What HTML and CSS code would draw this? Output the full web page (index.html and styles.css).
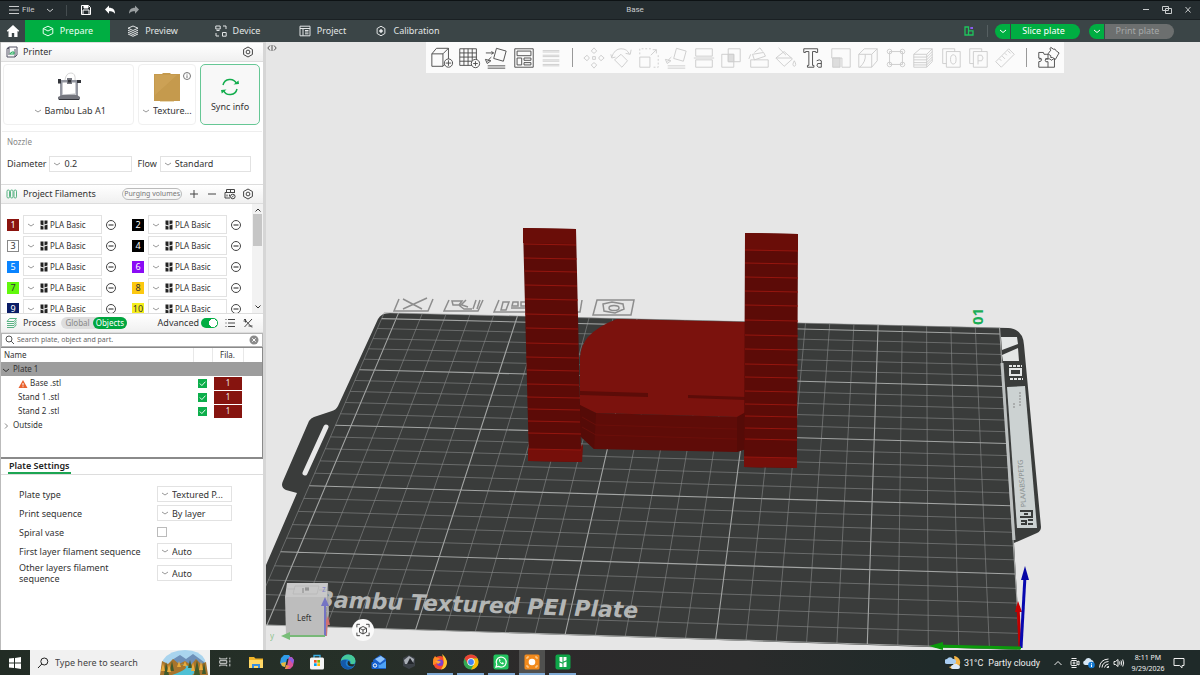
FILE: index.html
```html
<!DOCTYPE html>
<html lang="en">
<head>
<meta charset="utf-8">
<title>Base</title>
<link rel="stylesheet" href="styles.css">
</head>
<body>
<svg class="sprite" aria-hidden="true">
  <symbol id="hex" viewBox="0 0 12 12"><path d="M6 1 10.4 3.5v5L6 11 1.6 8.500v-5z"/><circle cx="6" cy="6" r="1.9"/></symbol>
  <symbol id="minus" viewBox="0 0 12 12"><circle cx="6" cy="6" r="4.500"/><path d="M3.500 6h5" stroke-width="1.200"/></symbol>
  <symbol id="chev" viewBox="0 0 8 8"><path d="M1 3l3 2.500L7 3"/></symbol>
  <symbol id="check" viewBox="0 0 10 10"><path d="M2 5l2.300 2.300L8.200 3"/></symbol>
</svg>

<header class="titlebar">
  <button class="file-menu"><svg class="ic i10" viewBox="0 0 10 10"><path d="M0 1.500h10M0 5h10M0 8.500h10"/></svg>File</button>
  <button class="tb-btn" aria-label="File menu"><svg class="ic i8"><use href="#chev"/></svg></button>
  <span class="tb-sep"></span>
  <button class="tb-btn" aria-label="Save"><svg class="ic i12 bright" viewBox="0 0 12 12"><path d="M1.500 1.500h7l2 2v7h-9zM3 10V6h6v4"/><path d="M4 2h4v2H4z" fill="currentColor"/></svg></button>
  <button class="tb-btn" aria-label="Undo"><svg class="ic i12 bright" viewBox="0 0 12 12"><path d="M5 1.500v2.300c4 0 6 2 6 6-1.500-2-3-2.500-6-2.500v2.400L1 5.500z" fill="currentColor" stroke="none"/></svg></button>
  <button class="tb-btn" aria-label="Redo"><svg class="ic i12 dim" viewBox="0 0 12 12"><path d="M7 1.500v2.300c-4 0-6 2-6 6 1.500-2 3-2.500 6-2.500v2.400l4-4.200z" fill="currentColor" stroke="none"/></svg></button>
  <h1 class="doc-title">Base</h1>
  <div class="win-controls">
    <button class="tb-btn" aria-label="Minimize"><svg class="ic i10" viewBox="0 0 10 10"><path d="M2 4.500h6"/></svg></button>
    <button class="tb-btn" aria-label="Restore"><svg class="ic i10" viewBox="0 0 10 10"><path d="M.5 1.500h6v4h-6zM3.500 3.500h6v5h-6z"/></svg></button>
    <button class="tb-btn" aria-label="Close"><svg class="ic i10" viewBox="0 0 10 10"><path d="M2.500 2l5 5.500M7.500 2l-5 5.500"/></svg></button>
  </div>
</header>

<nav class="navbar">
  <button class="home" aria-label="Home"><svg class="i14" viewBox="0 0 14 14"><path d="M7 1 .8 6.800l.9.900.8-.600V13h3.300V9h2.400v4h3.300V7.100l.8.600.9-.900z" fill="#fff"/></svg></button>
  <a class="tab active" href="#prepare"><svg class="ic i12" viewBox="0 0 12 12"><path d="M6 1.200 10.800 3.500v5L6 10.800 1.200 8.500v-5zM1.200 3.500 6 6l4.800-2.500"/></svg>Prepare</a>
  <a class="tab" href="#preview"><svg class="ic i12" viewBox="0 0 12 12"><path d="M6 1l5 2.200-5 2.300-5-2.300zM1 5.200l5 2.300 5-2.300M1 7.200l5 2.300 5-2.300M1 9l5 2.300L11 9"/></svg>Preview</a>
  <a class="tab" href="#device"><svg class="ic i12" viewBox="0 0 12 12"><path d="M.8 1h4.400v3H.8zM1.500 5.500h3M7.500 7.500h3.700v3.700H7.500zM8 1h3v3M1 8v3h3"/></svg>Device</a>
  <a class="tab" href="#project"><svg class="ic i12" viewBox="0 0 12 12"><path d="M1 1.200h10v9.600H1zM1 3.500h10M4 3.500v7.300M6 5.500h3.500M6 7h3.500M6 8.800h3.500"/></svg>Project</a>
  <a class="tab" href="#calibration"><svg class="ic i12" viewBox="0 0 12 12"><path d="M6 1.200 9.900 3.500v5L6 10.800 2.100 8.500v-5z"/><circle cx="6" cy="6" r="1.300" fill="currentColor"/></svg>Calibration</a>
  <div class="nav-right">
    <button class="layout-btn" aria-label="Layout"><svg class="i10" viewBox="0 0 10 10"><path d="M1 1h3.500v8H1zM4.500 4.800H9V9H4.500z" fill="none" stroke="#1fc45d" stroke-width="1.300"/><path d="M6.300 1H9v2H6.300z" fill="#8a5cf0"/></svg></button>
    <span class="nav-sep"></span>
    <div class="split"><button class="split-arrow" aria-label="Slice options"><svg class="ic i8"><use href="#chev"/></svg></button><button class="split-main">Slice plate</button></div>
    <div class="split off"><button class="split-arrow" aria-label="Print options"><svg class="ic i8"><use href="#chev"/></svg></button><button class="split-main" disabled>Print plate</button></div>
  </div>
</nav>

<div class="workspace">
<aside class="sidebar">
  <section>
    <div class="sec-head">
      <svg class="ic i12 sec-ic" viewBox="0 0 12 12"><path d="M1 2.500 3 1h8v8l-2 2H1zM3 1v8M9 3v8M1 2.500h2"/><path d="M4 7.500l2-1.500h2v2H4z" stroke="#19a955"/></svg>
      <h2>Printer</h2>
      <button class="icon-btn push" aria-label="Printer settings"><svg class="ic i12"><use href="#hex"/></svg></button>
    </div>
    <div class="cards">
      <div class="card wide">
        <svg class="pic" viewBox="0 0 32 32"><path d="M12 9q1-7 6-7t4 8" fill="none" stroke="#ccc" stroke-width=".8"/><path d="M6 9h20v2.500H6zM7 11h2.500v15H7zM22.500 11H25v15h-2.500z" fill="#9396a0"/><path d="M5 26l4-2h15l3 2v2.500H5zM14 7h5v6h-5z" fill="#74767e"/><path d="M5 8h3v4.500H5zM24 9h4v3h-4zM15 9h3v2.500h-3zM6 28h20v1H6z" fill="#33353b"/><path d="M10 23.500l12-1v1.500H10z" fill="#b6b8bd"/></svg>
        <select class="plain" aria-label="Printer model"><option>Bambu Lab A1</option></select>
      </div>
      <div class="card mid">
        <svg class="pic" viewBox="0 0 32 32"><path d="M3 3h8l1-1h7l1 1h9v27H3z" fill="#c59a4d"/><path d="M4 4h22L4 24z" fill="#d0a75c" opacity=".6"/><path d="M9 30.500h14" stroke="#ead9b5"/></svg>
        <svg class="ic i8 info" viewBox="0 0 8 8"><circle cx="4" cy="4" r="3.500"/><path d="M4 3.300V6M4 1.800v.8"/></svg>
        <select class="plain" aria-label="Plate"><option>Texture...</option></select>
      </div>
      <button class="sync"><svg viewBox="0 0 20 20"><path d="M3 8a7.200 7.200 0 0 1 13.500-1.500M17 12A7.200 7.200 0 0 1 3.500 13.500" fill="none" stroke="#12ad4d" stroke-width="1.500"/><path d="M13.500 7.500l5.500-.5-.5-3.500zM6.500 12.500l-5.500.5.8 3.500z" fill="#12ad4d"/></svg>Sync info</button>
    </div>
    <div class="nozzle">
      <h3>Nozzle</h3>
      <div class="nozzle-row">
        <label for="dia">Diameter</label><select id="dia" class="box"><option>0.2</option></select>
        <label for="flow">Flow</label><select id="flow" class="box"><option>Standard</option></select>
      </div>
    </div>
  </section>

  <section>
    <div class="sec-head">
      <svg class="ic i12 sec-ic green" viewBox="0 0 12 12"><rect x="1" y="2" width="2.500" height="8" rx="1.200"/><rect x="4.500" y="2" width="2.500" height="8" rx="1.200"/><rect x="8" y="2" width="2.500" height="8" rx="1.200"/></svg>
      <h2>Project Filaments</h2>
      <button class="purge push">Purging volumes</button>
      <button class="icon-btn" aria-label="Add filament"><svg class="ic i12" viewBox="0 0 12 12"><path d="M6 2v8M2 6h8"/></svg></button>
      <button class="icon-btn" aria-label="Remove filament"><svg class="ic i12" viewBox="0 0 12 12"><path d="M2 6h8"/></svg></button>
      <button class="icon-btn" aria-label="Sync filaments"><svg class="ic i12" viewBox="0 0 12 12"><path d="M2.500 1.500h8v3h-8zM1 4.500h10M1 4.500V10h5M3 6.500v2M5.500 6.500v2M6.500 1.500v3"/><circle cx="8.800" cy="8.500" r="2.300"/><path d="M7.800 9.500l2-2"/></svg></button>
      <button class="icon-btn" aria-label="Filament settings"><svg class="ic i12"><use href="#hex"/></svg></button>
    </div>
    <div class="fil-area">
      <ul class="fil-list">
        <li><span class="chip c1">1</span><select class="box fil" aria-label="Filament 1"><option>PLA Basic</option></select><button class="icon-btn" aria-label="Edit 1"><svg class="ic i12"><use href="#minus"/></svg></button></li>
        <li><span class="chip c2">2</span><select class="box fil" aria-label="Filament 2"><option>PLA Basic</option></select><button class="icon-btn" aria-label="Edit 2"><svg class="ic i12"><use href="#minus"/></svg></button></li>
        <li><span class="chip c3">3</span><select class="box fil" aria-label="Filament 3"><option>PLA Basic</option></select><button class="icon-btn" aria-label="Edit 3"><svg class="ic i12"><use href="#minus"/></svg></button></li>
        <li><span class="chip c2">4</span><select class="box fil" aria-label="Filament 4"><option>PLA Basic</option></select><button class="icon-btn" aria-label="Edit 4"><svg class="ic i12"><use href="#minus"/></svg></button></li>
        <li><span class="chip c5">5</span><select class="box fil" aria-label="Filament 5"><option>PLA Basic</option></select><button class="icon-btn" aria-label="Edit 5"><svg class="ic i12"><use href="#minus"/></svg></button></li>
        <li><span class="chip c6">6</span><select class="box fil" aria-label="Filament 6"><option>PLA Basic</option></select><button class="icon-btn" aria-label="Edit 6"><svg class="ic i12"><use href="#minus"/></svg></button></li>
        <li><span class="chip c7">7</span><select class="box fil" aria-label="Filament 7"><option>PLA Basic</option></select><button class="icon-btn" aria-label="Edit 7"><svg class="ic i12"><use href="#minus"/></svg></button></li>
        <li><span class="chip c8">8</span><select class="box fil" aria-label="Filament 8"><option>PLA Basic</option></select><button class="icon-btn" aria-label="Edit 8"><svg class="ic i12"><use href="#minus"/></svg></button></li>
        <li><span class="chip c9">9</span><select class="box fil" aria-label="Filament 9"><option>PLA Basic</option></select><button class="icon-btn" aria-label="Edit 9"><svg class="ic i12"><use href="#minus"/></svg></button></li>
        <li><span class="chip c10">10</span><select class="box fil" aria-label="Filament 10"><option>PLA Basic</option></select><button class="icon-btn" aria-label="Edit 10"><svg class="ic i12"><use href="#minus"/></svg></button></li>
      </ul>
      <div class="scroll"><svg class="ic i8" viewBox="0 0 8 8"><path d="M1.500 5.500 4 3l2.500 2.500"/></svg><span class="thumb"></span><svg class="ic i8 last" viewBox="0 0 8 8"><path d="M1.500 2.500 4 5l2.500-2.500"/></svg></div>
    </div>
  </section>

  <section>
    <div class="sec-head process">
      <svg class="ic i12 sec-ic green" viewBox="0 0 12 12"><path d="M3.500 1.500h7L8 4.500H1zM1 6.500h7l2.500-3M1 8.500h7l2.500-3M1 10.500h7l2.500-3"/></svg>
      <h2>Process</h2>
      <div class="seg"><button>Global</button><button class="on">Objects</button></div>
      <label class="adv push">Advanced<input type="checkbox" class="switch" checked></label>
      <button class="icon-btn" aria-label="List"><svg class="ic i12" viewBox="0 0 12 12"><path d="M4 2.500h7M4 6h7M4 9.500h7M1.500 2.500h1M1.500 6h1M1.500 9.500h1"/></svg></button>
      <button class="icon-btn" aria-label="Compare"><svg class="ic i12" viewBox="0 0 12 12"><path d="M2 2l8 8.500M10 2 2.500 10M1.500 4h3M6.500 9h4M3.500 2v3.500"/></svg></button>
    </div>
    <label class="search">
      <svg class="ic i10" viewBox="0 0 10 10"><circle cx="4" cy="4" r="3"/><path d="M6.200 6.200 9 9"/></svg>
      <input type="text" placeholder="Search plate, object and part." aria-label="Search plate, object and part">
      <svg class="i10" viewBox="0 0 10 10"><circle cx="5" cy="5" r="4.500" fill="#8b8b8b"/><path d="M3.300 3.300l3.400 3.400M6.700 3.300 3.300 6.700" stroke="#fff"/></svg>
    </label>
    <div class="tree">
      <table>
        <colgroup><col><col class="col-chk"><col class="col-fil"><col class="col-end"></colgroup>
        <thead><tr><th>Name</th><th></th><th class="ctr">Fila.</th><th></th></tr></thead>
        <tbody>
          <tr class="sel"><td><svg class="ic i8 dk"><use href="#chev"/></svg>Plate 1</td><td></td><td></td><td></td></tr>
          <tr><td class="in1"><svg class="i10" viewBox="0 0 10 10"><path d="M5 1l4.500 8h-9z" fill="#e8622f"/><path d="M5 4v2.500M5 7.300v.9" stroke="#fff"/></svg>Base .stl</td><td><span class="tick"><svg class="ic i10"><use href="#check"/></svg></span></td><td><span class="fila">1</span></td><td></td></tr>
          <tr><td class="in2">Stand 1 .stl</td><td><span class="tick"><svg class="ic i10"><use href="#check"/></svg></span></td><td><span class="fila">1</span></td><td></td></tr>
          <tr><td class="in2">Stand 2 .stl</td><td><span class="tick"><svg class="ic i10"><use href="#check"/></svg></span></td><td><span class="fila">1</span></td><td></td></tr>
          <tr><td><svg class="ic i8 lt" viewBox="0 0 8 8"><path d="M3 1.500 5.500 4 3 6.500"/></svg>Outside</td><td></td><td></td><td></td></tr>
        </tbody>
      </table>
    </div>
  </section>

  <section class="settings">
    <div class="set-tabs"><h2>Plate Settings</h2></div>
    <div class="set-grid">
      <label for="s1">Plate type</label><select id="s1" class="box"><option>Textured P...</option></select>
      <label for="s2">Print sequence</label><select id="s2" class="box"><option>By layer</option></select>
      <label for="s3">Spiral vase</label><input id="s3" type="checkbox" class="chk">
      <label for="s4">First layer filament sequence</label><select id="s4" class="box"><option>Auto</option></select>
      <label for="s5">Other layers filament sequence</label><select id="s5" class="box"><option>Auto</option></select>
    </div>
  </section>
</aside>

<main class="viewport">
  <svg class="scene" viewBox="266 42 934 608" preserveAspectRatio="xMidYMid slice" role="img" aria-label="Build plate with three parts">
    <g class="plate-icons">
      <path d="M399 299l-5 12h34l5-12M403 299l19 10M427 298l-24 11"/>
      <path d="M449 300l-5 11h34l5-11M452 301h10l-3 4h-6zM466 300l-6 6 4 3h8M468 307l-6-2M476 300l-3 9M480 300l-3 9"/>
      <path d="M499 300l-5 12h86l2-12M503 302h6l-3 8h-5zM513 302h5v4h-6zM511 308h14M521 302h5v4h-5z"/>
      <path d="M597 300h37l-3 15h-38zM603 304l9-2 11 2 1 5-9 4-11-2z"/><ellipse cx="614" cy="308" rx="5" ry="2.500"/>
    </g>
    <path fill="#3a3c3b" d="M266 625V565L297 493 286 490Q280 487 283 481L309 421Q311 418 314 417L332 411Q336 410 338 406L378 319Q381 313 390 313L1008 328Q1023 329 1024 345L1041 527Q1041 531 1037 533L1014 543 1020 650Z"/>
    <path d="M326 427 305 473" stroke="#e8e8e8" stroke-width="5" stroke-linecap="round"/>
    <path id="grid-minor" class="minor"/>
    <path id="grid-major" class="major"/>
    <path d="M1002 363l12 177" stroke="#bcc0c0" stroke-width="3"/>
    <path d="M1001 337h16l1 7-16 6zM1002 355l16-7 1 13h-16z" fill="#e4e6e6"/>
    <path fill="#ccd2d2" d="M1007 387l18-1 12 142-20 0z"/>
    <path d="M1010 369h11v6h-11zM1008 366h14M1009 379h14" fill="none" stroke="#e4e6e6" stroke-width="2"/>
    <path d="M1008 366h14M1009 379h14" stroke="#3a3c3b" stroke-width="2" stroke-dasharray="1 3"/>
    <path d="M1020 511h12v6h-12M1024 514h4M1021 521h5v3h-5M1028 520h5M1028 524h5M1032 511v6" fill="none" stroke="#3a3c3b" stroke-width="2"/>
    <g class="plate-notes"><text transform="translate(1026 507) rotate(-94)">PLA/ABS/PETG</text><path d="M1014 408v-6M1020 406v-14" stroke="#888" stroke-dasharray="2 1"/></g>
    <text class="plate-num" transform="translate(983 325) rotate(-90)">01</text>
    <text class="plate-name" transform="translate(638 618) rotate(2)">Bambu Textured PEI Plate</text>

    <path fill="#7b120d" d="M580 357Q581 345 588 337 598 326 617 319L746 322V414L737 417 596 413 580 407Z"/>
    <path fill="#5f0c08" d="M580 405 596 413 737 417 746 412V449L737 452 594 449 580 436Z"/>
    <path fill="#4b0905" d="M737 417l9-5v37l-9 3zM580 405l16 8-2 36-14-13z" opacity=".5"/>
    <path d="M582 417l14 8 141 4M582 427l14 8 141 4" stroke="#6d0f0a" stroke-width=".8" fill="none"/>
    <path fill="#5c0c08" d="M580 391l68 2v4l-68-2zM688 395l58 2v3l-58-2z"/>

    <path fill="#5c0b07" d="M523 228l53 1 5 219 1 14-53-1z"/>
    <path fill="#760f0a" d="M528 449l52 1 2-6 1 2-1 16-54-1z"/>
    <path fill="#5c0b07" d="M745 233l53 1-1 217v17l-53-1z"/>
    <path fill="#760f0a" d="M744 457l53 1v10l-53-1z"/>
    <path fill="#6a0d08" d="M523 228l53 1v15l-53-1zM745 233l53 1v17l-53-1z"/>
    <path class="steps" d="M524 244l52 1M524 258l53 1M525 271l52 1M525 285l52 1M525 299l53 1M525 314l53 1M526 328l52 1M526 343l52 1M526 357l53 1M527 370l52 1M527 384l52 1M527 397l53 1M528 409l52 1M528 421l52 1M528 433l53 1M528 449l53 1M745 250l53 1M745 263l53 1M745 277l53 1M745 291l53 1M745 305l53 1M745 320l53 1M745 335l53 1M745 349l53 1M745 364l53 1M745 377l53 1M745 391l52 1M745 404l52 1M745 416l52 1M745 428l52 1M745 439l52 1M744 457l53 1"/>

    <path d="M1020 647 1018 606" stroke="#c00000" stroke-width="3"/><path d="M1015 612l3-11 4 11z" fill="#c80000"/>
    <path d="M1021 648 1025 576" stroke="#0808b0" stroke-width="3"/><path d="M1021 580l4-14 4 14z" fill="#0505a5"/>
    <path d="M1021 648 935 646" stroke="#0a9a0a" stroke-width="3"/><path d="M943 642l-14 4 14 4z" fill="#0a9a0a"/>
  </svg>

  <div class="collapse"><svg class="ic i10" viewBox="0 0 10 10"><path d="M3 2.500.8 5 3 7.500M7 2.500 9.200 5 7 7.500M5 2v6"/></svg></div>

  <div class="tools">
    <button aria-label="Add"><svg class="ic" viewBox="0 0 26 26"><path d="M2 8.500h12V22H2zM2 8.500l5-6h13l-6 6M20 2.500V14M14 22l3-3"/><circle cx="20" cy="18.500" r="4.500" fill="#fbfbfb"/><path d="M17 18.500h6M20 15.500v6"/></svg></button>
    <button aria-label="Add plate"><svg class="ic" viewBox="0 0 26 26"><path d="M3 3h18v18H3zM7.500 3v18M12 3v18M16.500 3v18M3 7.500h18M3 12h18M3 16.500h18"/><circle cx="20" cy="19" r="4.500" fill="#fbfbfb"/><path d="M17.500 19h5M20 16.500v5"/></svg></button>
    <button aria-label="Auto orient"><svg class="ic" viewBox="0 0 26 26"><path d="M13.500 2.500 24 5.500 21 16.500 10.500 13.500zM2 7.500h8M8 6l2.500 1.500L8 9M8 12q-3 2-4 5M1.500 14.500 3.500 19l4-3zM4 21.500h19M4 24h19"/></svg></button>
    <button aria-label="Arrange"><svg class="ic" viewBox="0 0 26 26"><path d="M3 3h20v20H3zM5.500 5.500h15v5h-15zM5.500 13h5v7.500h-5zM13 13h7.500v2.500H13zM13 18h7.500v2.500H13z"/></svg></button>
    <button class="off" aria-label="Layers"><svg class="ic" viewBox="0 0 26 26"><path d="M4 5h18M4 6.500h18M4 10h18M4 11.500h18M4 15h18M4 16.500h18M4 20h18M4 21.500h18"/></svg></button>
    <span class="tool-sep"></span>
    <button class="off" aria-label="Move"><svg class="ic" viewBox="0 0 26 26"><path d="M13 2l3 3.500-3 2.500-3-2.500zM13 24l3-3.500-3-2.500-3 2.500zM2 13l3.500-3L8 13l-2.500 3zM24 13l-3.500-3-2.500 3 2.500 3zM11.500 11.500h3v3h-3z"/></svg></button>
    <button class="off" aria-label="Rotate"><svg class="ic" viewBox="0 0 26 26"><path d="M13 9l7 7-6 7-8-8zM3 12Q6 3 13 3t9 6M18 8l5 1 1-5M2 9l1 4 4-1"/></svg></button>
    <button class="off" aria-label="Scale"><svg class="ic" viewBox="0 0 26 26"><path d="M3 12h11v11H3zM15 10l6-6M17 4h4v4"/><path d="M3 9V3h12M23 10v13h-6" stroke-dasharray="2 2"/></svg></button>
    <button class="off" aria-label="Lay on face"><svg class="ic" viewBox="0 0 26 26"><path d="M13.500 2.500 24 5.500 21 16.500 10.500 13.500zM8 12q-3 2-4 5M1.500 14.500 3.500 19l4-3zM4 21.500h19M4 24h19"/></svg></button>
    <button class="off" aria-label="Cut"><svg class="ic" viewBox="0 0 26 26"><path d="M4 3h18v8H4zM4 15h18v8H4zM2 13h22"/></svg></button>
    <button class="off" aria-label="Boolean"><svg class="ic" viewBox="0 0 26 26"><path d="M3 9h13v14H3zM10 3h13v14H10z"/><path d="M10 9h6v8h-6z" fill="#ddd"/></svg></button>
    <button class="off" aria-label="Supports"><svg class="ic" viewBox="0 0 26 26"><path d="M4 15h19v8H4zM6 9l12-2 2 4-12 4zM8 7l6-5 3 4M4 9l-2 5"/></svg></button>
    <button class="off" aria-label="Paint"><svg class="ic" viewBox="0 0 26 26"><path d="M2 13l9-7 9 8-9 8zM3 13h16M5 2l8 8M22 16q3 5 0 6-3-1 0-6"/></svg></button>
    <button aria-label="Text"><svg class="ic" viewBox="0 0 26 26"><path d="M3 3h15v4h-2V6h-3.500v15h1.500v2H7v-2h1.500V6H5v1H3zM17 16q3-2 5 0v7h-3q-3-1-1-4h4"/></svg></button>
    <button class="off" aria-label="Shape"><svg class="ic" viewBox="0 0 26 26"><path d="M3 3h20v20h-9v-10H3z"/><path d="M4 13h8v10H4z" fill="#ddd"/></svg></button>
    <button class="off" aria-label="Seam"><svg class="ic" viewBox="0 0 26 26"><path d="M3 9h14v14H3zM3 9l6-6h14l-6 6M23 3v13l-6 7M10 9q1 8-6 14"/></svg></button>
    <button class="off" aria-label="Mesh"><svg class="ic" viewBox="0 0 26 26"><path d="M6 6h14v14H6z"/><circle cx="6" cy="6" r="2.500"/><circle cx="20" cy="6" r="2.500"/><circle cx="6" cy="20" r="2.500"/><circle cx="20" cy="20" r="2.500"/></svg></button>
    <button class="off" aria-label="Variable layers"><svg class="ic" viewBox="0 0 26 26"><path d="M3 9l7-6h13l-6 6zM3 9v14h14V9M17 23l6-6V3M3 12h14l6-6M3 15h14l6-6M3 18h14l6-6M3 20.500h14l6-6"/></svg></button>
    <button class="off" aria-label="Copy"><svg class="ic" viewBox="0 0 26 26"><path d="M8 6h15v17H8zM8 19H4V3h13v3"/><ellipse cx="15.500" cy="14.500" rx="3" ry="5"/></svg></button>
    <button class="off" aria-label="Paste"><svg class="ic" viewBox="0 0 26 26"><path d="M8 6h15v17H8zM8 19H4V3h13v3M13 20V10h4q3 3 0 6h-4"/></svg></button>
    <button class="off" aria-label="Measure"><svg class="ic" viewBox="0 0 26 26"><path d="M3 17 17 3l6 6L9 23zM7 14l2 2M10 11l3 3M13 8l2 2M16 5l3 3"/></svg></button>
    <span class="tool-sep"></span>
    <button aria-label="Assembly"><svg class="ic" viewBox="0 0 26 26"><path d="M3 7h5q0 3 3 2h2v5q-3-1-3 1.500t3 1.500v6H3v-6q3 0 3-2t-3-2zM13 14h2q1 3 4 0h1v9h-7M3 14h3M10 14h3M16 1.500l3 2q2-1 2 1l4 3-4 7-3-2q-3 1-2-2l-3-2 3-4q-2-1 0-3z"/></svg></button>
  </div>

  <svg class="gizmo" viewBox="0 0 64 62" role="img" aria-label="View orientation: Left">
    <path d="M17 3h41l-1 14H15z" fill="#c8c8c8"/><path d="M25 6h24l-2 8H23zM17 9h8M49 10h8" fill="none" stroke="#b3b3b3" stroke-width=".6"/>
    <path d="M33 8v5M36 7v4M38 7v4M35 9h4" stroke="#777" stroke-width=".8"/>
    <path d="M15 17h42l-1 39H16z" fill="#bdbdbd"/><path d="M57 17l1-14 1 30-3 23z" fill="#aaa"/>
    <text class="giz-text" x="27" y="41">Left</text>
    <text class="giz-z" x="52" y="12">z</text><text class="giz-y" x="0" y="59">y</text>
    <path d="M56 56 57 40" stroke="#c87878" stroke-width="2"/><path d="M54 45l4-9 2 9z" fill="#d07070"/>
    <path d="M55 56V24" stroke="#7474c4" stroke-width="2"/><path d="M51 26l4-9 4 9z" fill="#7474c4"/>
    <path d="M55 56H18" stroke="#78b878" stroke-width="2"/><path d="M20 52l-9 4 9 4z" fill="#78bd78"/>
  </svg>
  <button class="fit" aria-label="Fit view"><svg class="ic" viewBox="0 0 16 16"><path d="M1 5V1.500h3.500M11.500 1.500H15V5M15 11v3.500h-3.500M4.500 14.500H1V11M8 4l4 2v4.500L8 12.500 4 10.500V6zM4 6l4 2 4-2M8 8v4.500"/></svg></button>
</main>
</div>

<footer class="taskbar">
  <button class="start" aria-label="Start"><svg class="i12" viewBox="0 0 12 12"><path d="M0 1.500 5 1v4.500H0zM6 .9 12 0v5.500H6zM0 6.500h5V11l-5-.6zM6 6.500h6V12l-6-.9z" fill="#fff"/></svg></button>
  <label class="tb-search"><svg class="ic i12" viewBox="0 0 12 12"><circle cx="7.300" cy="4.500" r="3.500"/><path d="M4.800 7 1 11"/></svg><input type="text" placeholder="Type here to search" aria-label="Type here to search">
    <svg class="landscape" viewBox="0 0 48 25"><path d="M3 10Q10 0 25 0t20 10l3 15H0z" fill="#a9d4ee"/><path d="M12 10l8-5 6 4 7-5 11 8v5H10z" fill="#6d8fb8"/><path d="M0 25l2-14 6 3 5-5 6 5 6-3 6 4 5-6 5 5 5-2 2 13z" fill="#a8742c"/><path d="M12 25q9-3 13-6t-6-5q11 1 14 5t-1 6z" fill="#4fc0d4"/><path d="M4 25l2-13 3 13zM10 21l2-10 2 10zM34 25l3-15 3 15zM42 24l2-12 2 12zM28 18l2-8 2 8z" fill="#3f5a2c"/><path d="M7 22l2-8 2 8zM31 21l2-9 2 9zM39 20l2-9 2 9zM17 17l2-6 2 6zM1 21l2-8 2 8zM23 16l2-5 2 5z" fill="#e8ab3c"/></svg>
  </label>
  <div class="apps">
    <button aria-label="Task view"><svg class="ic" viewBox="0 0 16 16"><path d="M2 3v1.500h8V3M2 13v-1.500h8V13M2 6.500h8v3H2zM13.500 3v2M13.500 6v2.500M13.500 10v3"/></svg></button>
    <button aria-label="Explorer"><svg viewBox="0 0 16 16"><path d="M1 3h5l1.500 1.500H15V14H1z" fill="#f0b429"/><path d="M1 6h14v8H1z" fill="#ffd866"/><path d="M4 10h8v4H10v-2H6v2H4z" fill="#3a8ee0"/></svg></button>
    <button aria-label="Copilot"><svg viewBox="0 0 16 16"><path d="M5 1h5l2 3-4 1-2 8-3-1-2-3 1-5z" fill="#2f9be8"/><path d="M10 3h3l2 3-1 6-3 3H6l2-3z" fill="#d8539a"/><path d="M12 3l3 3-1 4-4-5z" fill="#8b5ce0"/><path d="M2 9l5-1-1 5-3-1z" fill="#e8b93a"/><path d="M8 15h-2l1-4 4 1z" fill="#f08a4b"/></svg></button>
    <button aria-label="Store"><svg viewBox="0 0 16 16"><path d="M5 4V1.500h6V4" fill="none" stroke="#3bb0e8" stroke-width="1.300"/><rect x="1" y="3.500" width="14" height="12" rx="1.500" fill="#f5f5f5"/><path d="M5 6h2.700v2.700H5z" fill="#f25022"/><path d="M8.300 6H11v2.700H8.300z" fill="#7fba00"/><path d="M5 9.300h2.700V12H5z" fill="#00a4ef"/><path d="M8.300 9.300H11V12H8.300z" fill="#ffb900"/></svg></button>
    <button aria-label="Edge"><svg viewBox="0 0 16 16"><circle cx="8" cy="8" r="7.500" fill="#1e7fd0"/><path d="M1 6Q3 .5 8.500.5 15 1 15.500 7 15 11 10 10.500 12 7 8 5.500 4 4.500 1 7z" fill="#45c99a"/><path d="M1 7Q4 5 7 6.500 5 8 6 11q2 3 7 2-3 3-7 2Q0 13 1 7z" fill="#1459a8"/><path d="M8 7q2 0 2 2 0 2 5 1l-2 2.500Q8 13 7.500 9.500z" fill="#222d2a"/></svg></button>
    <button aria-label="Outlook"><svg viewBox="0 0 16 16"><path d="M2 6l7-5 6 4v10H3z" fill="#1a5fc8"/><path d="M4 5l6-3 4 3-5 4z" fill="#8cc4ff"/><path d="M3 8l6 3 6-4v7H3z" fill="#4da2f5"/><rect x=".5" y="8" width="7" height="7" rx="1" fill="#1460d0"/><circle cx="4" cy="11.500" r="1.700" fill="none" stroke="#fff"/></svg></button>
    <button aria-label="Inkscape"><svg viewBox="0 0 16 16"><path d="M8 1l6 3v8l-6 3-6-3V4z" fill="#3c4147"/><path d="M8 2l5 3-1 5H4L3 6z" fill="#a9aeb5"/><path d="M9 4l4 6H6z" fill="#22262b"/></svg></button>
    <button class="open" aria-label="Firefox"><svg viewBox="0 0 16 16"><circle cx="8" cy="8.800" r="6.800" fill="#f5482f"/><path d="M10 0q5 4 5 9-1 6-6 6.500Q14 9 10 0z" fill="#ffc12e"/><path d="M1 8Q1 4 3 2q1 2 4 2l3 3-9 4z" fill="#ff8a22"/><circle cx="8" cy="8.800" r="3.300" fill="#7b3fd0"/><path d="M3 7q4-1 6 1l-3 2z" fill="#ffa436"/></svg></button>
    <button class="open" aria-label="Chrome"><svg viewBox="0 0 16 16"><circle cx="8" cy="8" r="7.500" fill="#34a853"/><path d="M8 4.300h6.500A7.500 7.500 0 0 1 8 15.500L11.300 9.800z" fill="#fbbc04"/><path d="M1.500 4.300A7.500 7.500 0 0 1 14.500 4.300H8L4.800 9.800z" fill="#ea4335"/><circle cx="8" cy="8" r="3.700" fill="#fff"/><circle cx="8" cy="8" r="2.900" fill="#4285f4"/></svg></button>
    <button class="open" aria-label="WhatsApp"><svg viewBox="0 0 16 16"><rect x=".5" y=".5" width="15" height="15" rx="2" fill="#22c35e"/><path d="M3 13l.8-2.500A5 5 0 1 1 5.500 12.300z" fill="none" stroke="#fff" stroke-width="1.200"/><path d="M6 5.500q0 4 4 5l1-1.500-1.700-.8-.8.800-1.600-1.600.6-.8L7 5z" fill="#fff"/></svg></button>
    <button class="open cur" aria-label="Recorder"><svg viewBox="0 0 16 16"><rect x=".5" y=".5" width="15" height="15" rx="1.500" fill="#f28a1c"/><circle cx="8" cy="8" r="3.300" fill="#fff"/><path d="M3 5V3h2M11 3h2v2M13 11v2h-2M5 13H3v-2" fill="none" stroke="#ffd9a8"/></svg></button>
    <button class="open" aria-label="Bambu Studio"><svg viewBox="0 0 16 16"><rect x=".5" y=".5" width="15" height="15" rx="2" fill="#0ea548"/><path d="M4.500 3h3v5.500l-3-1.300zM4.500 8.500l3 1.200V13h-3zM8.500 3h3v3.300l-3 1.200zM8.500 8.800l3-1.200V13h-3z" fill="#fff"/></svg></button>
  </div>
  <div class="tray">
    <svg class="weather" viewBox="0 0 16 16"><path d="M9 1a6.500 6.500 0 1 1-5 11Q11 11 9 1z" fill="#f6b545"/><path d="M2 9a2.500 2.500 0 0 1 0-5 3.500 3.500 0 0 1 6 0 2.500 2.500 0 0 1 1 5z" fill="#a9cdf2"/><path d="M8 14a2 2 0 0 1 0-4 3 3 0 0 1 5 0 2 2 0 0 1 0 4z" fill="#dbe9f8"/></svg>
    <span class="temp">31°C</span><span class="cond">Partly cloudy</span>
    <svg class="ic i10 up" viewBox="0 0 10 10"><path d="M1.500 7 5 3.500 8.500 7"/></svg>
    <svg class="ic i12" viewBox="0 0 12 12"><rect x="3" y="3.500" width="6" height="5" rx="1"/><circle cx="6" cy="6" r="1"/><path d="M3.500 1.500h5M3.500 10.500h5M9 5l2-1v4L9 7"/></svg>
    <svg class="i12" viewBox="0 0 12 12"><path d="M2 8a2.300 2.300 0 0 1 0-4.500 3.500 3.500 0 0 1 6.500-.5A2.600 2.600 0 0 1 9 8z" fill="#d5e6f5"/><circle cx="8.500" cy="8" r="3.300" fill="#1479d2"/><path d="M8.500 7.500V10M8.500 6v.8" stroke="#fff"/></svg>
    <svg class="ic i12" viewBox="0 0 12 12"><path d="M1.500 10.500Q2 2.500 10.500 2M4 10.500Q4.500 5 10.500 4.500M6.500 10.500Q7 7.500 10.500 7M9 10.500l1.500-1.500v1.500z"/></svg>
    <svg class="ic i12" viewBox="0 0 12 12"><path d="M1 4.500h1.500L5 2.500v7L2.500 7.500H1zM6.500 4.500q1 1.500 0 3M8 3.500q1.500 2.500 0 5M9.700 2.500q2 3.500 0 7"/></svg>
    <time class="clock"><span>8:11 PM</span><span>9/29/2026</span></time>
    <button aria-label="Notifications"><svg class="ic i12" viewBox="0 0 12 12"><path d="M1 1.500h10v7H9v2.300L6.700 8.500H1z"/></svg></button>
  </div>
</footer>
<script src="scene.js"></script>
</body>
</html>
```

FILE: styles.css
```css
* { box-sizing: border-box; }
body {
  margin: 0;
  height: 100vh;
  display: flex;
  flex-direction: column;
  overflow: hidden;
  font: 9px/12px "Noto Sans", "Open Sans", sans-serif;
  color: #333;
  background: #e6e6e6;
}
button, input, select { font: inherit; color: inherit; margin: 0; }
button { border: 0; padding: 0; background: none; display: flex; align-items: center; justify-content: center; }
h1, h2, h3, ul { margin: 0; padding: 0; font-size: inherit; font-weight: 400; list-style: none; }
svg { flex: none; display: block; }
.sprite { position: absolute; width: 0; height: 0; }
.ic { fill: none; stroke: currentColor; stroke-width: 1; }
.i8 { width: 8px; height: 8px; }
.i10 { width: 10px; height: 10px; }
.i12 { width: 12px; height: 12px; }
.i14 { width: 14px; height: 14px; }
.push { margin-left: auto; }

/* Title bar */
.titlebar {
  display: flex;
  align-items: center;
  height: 20px;
  flex: none;
  padding: 0 4px 0 9px;
  color: #c9cccd;
  background: #252d30;
  border-top: 1px solid #0d1214;
  border-bottom: 1px solid #1a2023;
  position: relative;
}
.file-menu { gap: 3px; font-size: 8px; margin-right: 7px; font-family: Roboto, sans-serif; }
.tb-btn { width: 16px; height: 16px; }
.tb-sep { width: 1px; height: 11px; background: #454d50; margin: 0 11px 0 8px; }
.titlebar > .tb-btn + .tb-btn { margin-left: 8px; }
.bright { color: #fff; }
.dim { color: #9a9fa1; }
.doc-title { position: absolute; left: 50%; width: 70px; text-align: center; font: 8px/12px Roboto, sans-serif; }
.win-controls { margin-left: auto; display: flex; gap: 5px; }

/* Navigation */
.navbar { display: flex; align-items: stretch; height: 22px; flex: none; background: #3b4547; color: #e2e5e6; }
.home { width: 25px; }
.tab { width: 85px; display: flex; align-items: center; justify-content: center; gap: 6px; color: inherit; text-decoration: none; }
.tab.active { background: #00ae42; color: #e9fff1; }
.nav-right { margin-left: auto; display: flex; align-items: center; padding-right: 26px; }
.layout-btn { width: 12px; }
.nav-sep { width: 1px; height: 12px; background: #566062; margin: 0 7px 0 12px; }
.split { display: flex; gap: 1px; height: 15px; width: 85px; border-radius: 8px; overflow: hidden; color: #fff; }
.split + .split { margin-left: 9px; }
.split button { background: #00ae42; }
.split-arrow { width: 15px; }
.split-main { flex: 1; }
.split .split-main { padding-right: 4px; }
.split.off .split-main { background: #6c6f6f; color: #a5a8a8; }

.workspace { flex: 1; min-height: 0; display: flex; }

/* Sidebar */
.sidebar { width: 266px; flex: none; background: #fff; border-left: 1px solid #bbb; border-right: 3px solid #d6d6d6; display: flex; flex-direction: column; }
.sec-head {
  display: flex;
  align-items: center;
  height: 20px;
  padding: 0 9px 0 5px;
  background: linear-gradient(#fff, #f0f0f0);
  border-top: 1px solid #ddd;
  border-bottom: 1px solid #ddd;
  gap: 6px;
}
.sec-head h2 { margin-left: -1px; }
.sec-ic { color: #556; }
.sidebar .green { color: #58b383; }
.icon-btn { width: 12px; height: 12px; color: #444; }
.cards { display: flex; gap: 4px; padding: 2px 3px 6px 2px; }
.card { height: 61px; padding-top: 6px; border: 1px solid #f0f0f0; border-radius: 4px; display: flex; flex-direction: column; align-items: center; position: relative; }
.wide { flex: 1; }
.mid { width: 58px; }
.pic { width: 32px; height: 32px; }
.info { position: absolute; right: 4px; top: 7px; color: #777; }
.sync { width: 60px; height: 61px; flex-direction: column; gap: 4px; border: 1px solid #66c795; border-radius: 5px; background: #f8f8f8; }
.sync svg { width: 20px; height: 20px; }
select {
  appearance: none;
  border: 0;
  border-radius: 0;
  outline: 0;
  height: 16px;
  padding: 0 0 0 14px;
  background: url("data:image/svg+xml,%3Csvg xmlns='http://www.w3.org/2000/svg' width='8' height='8'%3E%3Cpath d='M1 3l3 2 3-2' fill='none' stroke='%23999'/%3E%3C/svg%3E") 3px 50% no-repeat;
}
.plain { background-position: 3px 50%; }
.mid .plain { width: 56px; }
.box { border: 1px solid #e2e2e2; background-color: #fff; }
.nozzle { margin: 0 1px; padding: 4px 11px 12px 5px; border-top: 1px solid #eee; }
.nozzle h3 { color: #888; font-size: 8px; }
.nozzle-row { display: flex; align-items: center; margin-top: 8px; gap: 3px; }
.nozzle-row .box { width: 83px; }
.nozzle-row label + .box { margin-right: 2px; }
.nozzle-row .box:last-child { flex: 1; margin-right: 0; }

.purge { border: 1px solid #bbb; border-radius: 6px; height: 12px; padding: 0 1px; font-size: 7px; color: #777; }
.fil-area { display: flex; height: 109px; overflow: hidden; }
.fil-list { flex: 1; display: grid; grid-template-columns: 125px 1fr; grid-auto-rows: 21px; align-content: start; padding: 10px 0 0 6px; }
.fil-list li { display: flex; align-items: center; gap: 3px; }
.chip { width: 12px; height: 12px; margin-right: 1px; flex: none; text-align: center; color: #fff; line-height: 12px; }
.c1 { background: #8b130e; }
.c2 { background: #000; }
.c3 { color: #333; box-shadow: inset 0 0 0 1px #888; }
.c5 { background: #0a84ff; }
.c6 { background: #8a0cf5; }
.c7 { background: #62f80c; color: #333; }
.c8 { background: #fcc810; color: #333; }
.c9 { background: #0a1c66; }
.c10 { background: #f5ee1c; color: #333; }
.fil {
  width: 79px;
  height: 19px;
  font-size: 8px;
  padding-left: 26px;
  background-image:
    url("data:image/svg+xml,%3Csvg xmlns='http://www.w3.org/2000/svg' width='8' height='8'%3E%3Cpath d='M1 3l3 2 3-2' fill='none' stroke='%23999'/%3E%3C/svg%3E"),
    url("data:image/svg+xml,%3Csvg xmlns='http://www.w3.org/2000/svg' width='8' height='10'%3E%3Cpath d='M.5.5h3v5l-3-1zM.5 5.500l3 1v3h-3zM4.500.5h3v3l-3 1zM4.500 5.500l3-1v5h-3z' fill='%23222'/%3E%3C/svg%3E");
  background-position: 3px 50%, 16px 50%;
}
.scroll { width: 11px; background: #f2f2f2; display: flex; flex-direction: column; align-items: center; padding: 2px 0; }
.thumb { width: 9px; height: 32px; background: #c6c6c6; }
.last { margin-top: auto; }

.seg { display: flex; height: 12px; border-radius: 6px; background: #ddd; font-size: 8px; color: #888; }
.seg button { padding: 0 3px 0 4px; }
.seg .on { background: #00a63f; color: #fff; border-radius: 6px; padding: 0 3px; }
.adv { display: flex; align-items: center; gap: 2px; }
.switch { appearance: none; width: 17px; height: 10px; border-radius: 5px; background: radial-gradient(circle at 12px 5px, #fff 4px, transparent 4px) #00ae42; }
.search { display: flex; align-items: center; gap: 2px; height: 14px; padding: 0 3px; border: 1px solid #b5b5b5; color: #555; }
.search input, .tb-search input { flex: 1; min-width: 0; border: 0; outline: 0; background: none; padding: 0; }
.search input { font-size: 7px; }
input::placeholder { color: #666; opacity: 1; }

.tree { height: 112px; border: 1px solid #8a8a8a; border-width: 1px 1px 2px 0; }
.tree table { width: 100%; table-layout: fixed; border-collapse: collapse; font-size: 8px; }
.col-chk { width: 19px; }
.col-fil { width: 31px; }
.col-end { width: 19px; }
.tree th { height: 14px; padding: 0 3px; font-weight: 400; text-align: left; border-right: 1px solid #e8e8e8; }
.tree th:last-child { border: 0; }
.tree th.ctr { text-align: center; }
.tree td { height: 14px; padding: 0; line-height: 12px; white-space: nowrap; }
.tree td svg { display: inline-block; vertical-align: middle; margin: 0 3px 0 1px; }
.tree td.in1 { padding-left: 16px; }
.tree td.in1 svg { margin-right: 2px; }
.tree td.in2 { padding-left: 17px; }
.sel { background: #9d9d9d; }
.lt { color: #888; }
.tick { display: block; width: 9px; height: 9px; margin-left: 5px; background: #0cae4b; color: #fff; }
.tree td .tick svg { display: block; width: 9px; height: 9px; margin: 0; }
.fila { display: block; width: 28px; height: 13px; margin-left: 2px; text-align: center; background: #86140f; color: #eee; }

.set-tabs { border-bottom: 1px solid #ddd; padding-left: 7px; display: flex; }
.set-tabs h2 { font-weight: 600; color: #222; border-bottom: 2px solid #1ca552; padding: 1px 1px 0; }
.set-grid { display: grid; grid-template-columns: 125px 75px; gap: 3px 13px; padding: 11px 18px; align-items: center; line-height: 11px; }
.chk { appearance: none; width: 10px; height: 10px; border: 1px solid #bbb; margin: 3px 0; }

/* 3D viewport */
.viewport { flex: 1; min-width: 0; position: relative; overflow: hidden; background: #e6e6e6; }
.scene { width: 100%; height: 100%; }
.minor, .major { fill: none; stroke: #8a8c8b; stroke-width: .6; }
.major { stroke: #a3a5a4; stroke-width: 1.100; }
.plate-icons { fill: none; stroke: #8d8d8d; stroke-width: 1.500; }
.plate-name { font: italic bold 22px "DejaVu Sans", sans-serif; fill: #b4b6b5; text-anchor: end; }
.plate-num { font: bold 15px "Noto Sans", sans-serif; fill: #1aad55; }
.plate-notes { font: 7px "Noto Sans", sans-serif; fill: #8a9090; }
.steps { fill: none; stroke: #95160f; stroke-width: 1; }
.collapse { position: absolute; left: 1px; top: 1px; color: #555; }
.tools { position: absolute; left: 160px; top: 0; width: 638px; height: 31px; padding: 0 2px; display: flex; align-items: center; justify-content: space-between; background: #fbfbfb; color: #4a4a4a; }
.tools button { width: 27px; height: 29px; }
.tools svg { width: 24px; height: 24px; }
.tools .off { color: #ccc; }
.tool-sep { width: 1px; height: 19px; margin: 0 7px; background: #999; }
.gizmo { position: absolute; left: 4px; bottom: 8px; width: 64px; height: 62px; }
.giz-text { font: 8px "Noto Sans", sans-serif; fill: #333; }
.giz-z { font: 8px "Noto Sans", sans-serif; fill: #8888cc; }
.giz-y { font: 8px "Noto Sans", sans-serif; fill: #8fc48f; }
.fit { position: absolute; left: 86px; bottom: 9px; width: 22px; height: 22px; border-radius: 50%; background: #fafafa; }
.fit svg { width: 14px; height: 14px; }

/* Taskbar */
.taskbar { height: 25px; flex: none; display: flex; align-items: stretch; color: #f0f0f0; background: linear-gradient(90deg, #222c25, #263028 30%, #2d2a2b 45%, #2a2b2b 62%, #1f2a29 78%, #1f2a29); }
.start { width: 30px; }
.tb-search { width: 180px; display: flex; align-items: center; gap: 6px; padding: 0 2px 0 7px; background: #f1f1f1; color: #222; }
.tb-search input::placeholder { color: #444; }
.landscape { width: 48px; height: 25px; }
.apps { display: flex; width: 368px; }
.apps button { flex: 1; border-bottom: 2px solid transparent; margin: 0 2px; padding-top: 1px; }
.apps svg { width: 16px; height: 16px; }
.apps .ic { width: 14px; height: 14px; }
.apps .open { border-color: #7fa9d4; }
.apps .cur { background: #50504f; }
.tray { margin-left: auto; display: flex; align-items: center; gap: 3px; padding-right: 15px; }
.weather { width: 16px; height: 16px; }
.temp, .cond { font-family: Roboto, sans-serif; }
.cond { margin: 0 10px 0 2px; }
.up { margin-right: 2px; }
.clock { display: flex; flex-direction: column; align-items: center; font-size: 7px; line-height: 11px; width: 40px; margin-right: 2px; }
```

FILE: scene.js
```js
// Projects the 256 mm bed (origin at the front right corner) onto the viewport.
const corners = [[1020, 649], [267, 625], [396, 319], [1000, 334]];
const span = 250;

function projector([p0, p1, p2, p3]) {
  const dx1 = p1[0] - p2[0], dx2 = p3[0] - p2[0], sx = p0[0] - p1[0] + p2[0] - p3[0];
  const dy1 = p1[1] - p2[1], dy2 = p3[1] - p2[1], sy = p0[1] - p1[1] + p2[1] - p3[1];
  const det = dx1 * dy2 - dx2 * dy1;
  const g = (sx * dy2 - dx2 * sy) / det;
  const h = (dx1 * sy - sx * dy1) / det;
  return (u, v) => {
    const w = g * u + h * v + 1;
    return [0, 1].map(i =>
      (((p1[i] - p0[i] + g * p1[i]) * u + (p3[i] - p0[i] + h * p3[i]) * v + p0[i]) / w).toFixed(1));
  };
}

const project = projector(corners);
const at = (x, y) => project(x / span, y / span).join(' ');
let minor = '', major = '';
for (let mm = 0; mm <= 250; mm += 10) {
  const lines = `M${at(mm, 0)}L${at(mm, 256)}M${at(0, mm)}L${at(256, mm)}`;
  if (mm % 50 === 0) major += lines; else minor += lines;
}
minor += `M${at(256, 0)}L${at(256, 256)}L${at(0, 256)}`;
document.getElementById('grid-minor').setAttribute('d', minor);
document.getElementById('grid-major').setAttribute('d', major);
```
